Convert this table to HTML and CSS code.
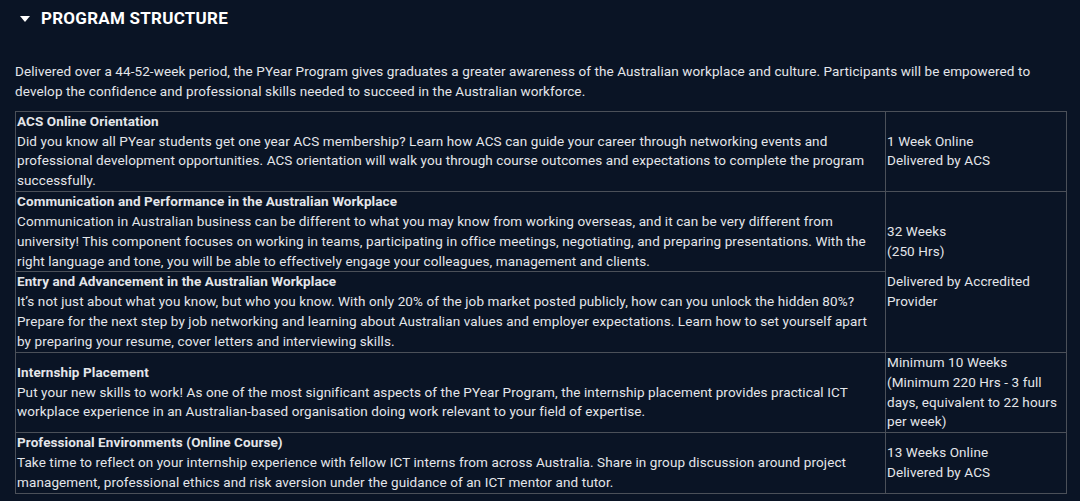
FILE: index.html
```html
<!DOCTYPE html>
<html lang="en">
<head>
    <meta charset="UTF-8">
    <title>Program Structure</title>
    <meta name="viewport" content="width=device-width, initial-scale=1.0">
    <link rel="stylesheet" href="styles.css">
</head>
<body>
    <section class="accordion">
        <h2 class="accordion-title">
            <span class="caret"></span>
            PROGRAM STRUCTURE
        </h2>

        <div class="accordion-body">
            <p class="intro">Delivered over a 44-52-week period, the PYear Program gives graduates a greater awareness of the Australian workplace and culture. Participants will be empowered to develop the confidence and professional skills needed to succeed in the Australian workforce.</p>

            <table class="structure">
                <tr>
                    <td class="desc">
                        <strong>ACS Online Orientation</strong><br>
                        Did you know all PYear students get one year ACS membership? Learn how ACS can guide your career through networking events and professional development opportunities. ACS orientation will walk you through course outcomes and expectations to complete the program successfully.
                    </td>
                    <td class="meta">1 Week Online<br>Delivered by ACS</td>
                </tr>
                <tr>
                    <td class="desc">
                        <strong>Communication and Performance in the Australian Workplace</strong><br>
                        Communication in Australian business can be different to what you may know from working overseas, and it can be very different from university! This component focuses on working in teams, participating in office meetings, negotiating, and preparing presentations. With the right language and tone, you will be able to effectively engage your colleagues, management and clients.
                    </td>
                    <td class="meta" rowspan="2">
                        <p>32 Weeks<br>(250 Hrs)</p>
                        <p>Delivered by Accredited Provider</p>
                    </td>
                </tr>
                <tr>
                    <td class="desc">
                        <strong>Entry and Advancement in the Australian Workplace</strong><br>
                        It’s not just about what you know, but who you know. With only 20% of the job market posted publicly, how can you unlock the hidden 80%? Prepare for the next step by job networking and learning about Australian values and employer expectations. Learn how to set yourself apart by preparing your resume, cover letters and interviewing skills.
                    </td>
                </tr>
                <tr>
                    <td class="desc">
                        <strong>Internship Placement</strong><br>
                        Put your new skills to work! As one of the most significant aspects of the PYear Program, the internship placement provides practical ICT workplace experience in an Australian-based organisation doing work relevant to your field of expertise.
                    </td>
                    <td class="meta">Minimum 10 Weeks<br>(Minimum 220 Hrs - 3 full days, equivalent to 22 hours per week)</td>
                </tr>
                <tr>
                    <td class="desc">
                        <strong>Professional Environments (Online Course)</strong><br>
                        Take time to reflect on your internship experience with fellow ICT interns from across Australia. Share in group discussion around project management, professional ethics and risk aversion under the guidance of an ICT mentor and tutor.
                    </td>
                    <td class="meta">13 Weeks Online<br>Delivered by ACS</td>
                </tr>
            </table>
        </div>
    </section>
</body>
</html>
```

FILE: styles.css
```css
:root {
    --bg: #0a1425;
    --text: #e4e6ea;
    --line: #4b5059;
}

body {
    margin: 0;
    background: var(--bg);
    color: var(--text);
    font-family: Roboto, 'Noto Sans', sans-serif;
    font-size: 13.5px;
    letter-spacing: 0.1px;
    line-height: 19.85px;
}

.accordion {
    padding: 0 13px 0 15px;
}

.accordion-title {
    display: flex;
    align-items: center;
    gap: 11px;
    margin: 0;
    padding: 8px 0 0 5px;
    height: 22px;
    font-size: 17px;
    font-weight: 700;
    color: #fff;
    letter-spacing: 0.25px;
}

.caret {
    width: 0;
    height: 0;
    border-left: 5.5px solid transparent;
    border-right: 5.5px solid transparent;
    border-top: 6px solid #fff;
}

.intro {
    margin: 32px 0 9px;
}

.structure {
    width: 100%;
    border-collapse: collapse;
}

.structure td {
    border: 1px solid var(--line);
    padding: 0 1px;
    vertical-align: middle;
}

.structure .meta {
    width: 178px;
}

.structure .meta p {
    margin: 0 0 10px;
}

.structure strong {
    font-weight: 700;
}
```
